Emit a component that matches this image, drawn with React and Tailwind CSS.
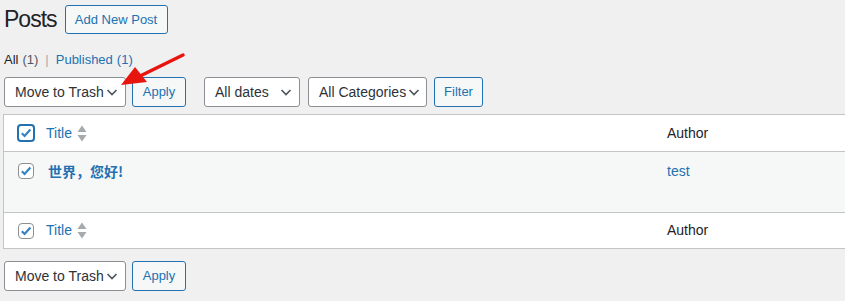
import React from "react";

function Chevron() {
  return (
    <svg width="12" height="12" viewBox="0 0 12 12" className="shrink-0">
      <path d="M1.5 4l4.5 4.5 4.5-4.5" fill="none" stroke="#50575e" strokeWidth="1.7" />
    </svg>
  );
}

function Select({ label, w, pr }) {
  return (
    <div
      className={`h-[30px] ${w} flex items-center justify-between pl-[10px] ${pr} bg-white border border-[#8c8f94] rounded-[3px] text-[#2c3338] text-[14px]`}
    >
      <span className="whitespace-nowrap">{label}</span>
      <Chevron />
    </div>
  );
}

function Btn({ label, w }) {
  return (
    <div
      className={`h-[30px] ${w} flex items-center justify-center bg-[#f6f7f7] border border-[#2271b1] rounded-[3px] text-[#2271b1] text-[13px]`}
    >
      {label}
    </div>
  );
}

function Check({ focus }) {
  return (
    <div
      className={
        focus
          ? "w-[18px] h-[18px] rounded-[4px] border-2 border-[#2271b1] bg-white flex items-center justify-center"
          : "w-[16px] h-[16px] rounded-[4px] border border-[#8c8f94] bg-white flex items-center justify-center"
      }
    >
      <svg width="12" height="12" viewBox="0 0 12 12">
        <path d="M1.8 6.2l2.8 2.8L10.4 2.6" fill="none" stroke="#3582c4" strokeWidth="2.2" />
      </svg>
    </div>
  );
}

function Sort() {
  return (
    <svg width="10" height="17" viewBox="0 0 10 17" className="ml-[5px]">
      <path d="M0.5 7L5 0.5 9.5 7z" fill="#a7aaad" />
      <path d="M0.5 10L5 16.5 9.5 10z" fill="#a7aaad" />
    </svg>
  );
}

function HeadRow({ focus, h, border }) {
  return (
    <div className={`flex items-center ${h} ${border} bg-white`}>
      <div className="w-[42px] flex justify-center pl-[2px]">
        <Check focus={focus} />
      </div>
      <div className="flex items-center w-[621px] text-[14px] text-[#2271b1]">
        Title
        <Sort />
      </div>
      <div className="text-[14px] text-[#1d2327]">Author</div>
    </div>
  );
}

export default function App() {
  return (
    <div className="relative min-h-[301px] bg-[#f0f0f1] overflow-hidden font-['Liberation_Sans',sans-serif] text-[13px]">
      <div className="pl-[4px] pt-[5px]">
        <div className="flex items-center h-[29px]">
          <h1 className="text-[23px] leading-[29px] tracking-[-1px] text-[#1d2327] font-normal">Posts</h1>
          <div className="ml-[8px] h-[29px] w-[103px] flex items-center justify-center bg-[#f6f7f7] border border-[#2271b1] rounded-[3px] text-[#2271b1] text-[13px]">
            Add New Post
          </div>
        </div>
        <div className="mt-[17px] h-[18px] leading-[18px] text-[13px] flex items-center text-[#50575e]">
          <span className="text-[#1d2327]">All</span>
          <span className="ml-[4px]">(1)</span>
          <span className="mx-[7px] text-[#a7aaad]">|</span>
          <span className="text-[#2271b1]">Published</span>
          <span className="ml-[4px] text-[#2271b1]">(1)</span>
        </div>
        <div className="mt-[8px] flex items-center">
          <Select label="Move to Trash" w="w-[122px]" pr="pr-[7px]" />
          <div className="ml-[6px]">
            <Btn label="Apply" w="w-[54px]" />
          </div>
          <div className="ml-[18px]">
            <Select label="All dates" w="w-[96px]" pr="pr-[7px]" />
          </div>
          <div className="ml-[8px]">
            <Select label="All Categories" w="w-[119px]" pr="pr-[6px]" />
          </div>
          <div className="ml-[7px]">
            <Btn label="Filter" w="w-[49px]" />
          </div>
        </div>
        <div className="mt-[7px] -ml-px w-[880px] border border-[#c3c4c7] bg-white">
          <HeadRow focus h="h-[37px]" border="border-b border-[#c3c4c7]" />
          <div className="flex items-start h-[61px] border-b border-[#c3c4c7] bg-[#f6f7f7] pt-[11px]">
            <div className="w-[42px] flex justify-center pl-[2px]">
              <Check />
            </div>
            <div className="w-[621px] pl-[2px] text-[14px] font-bold text-[#2271b1] font-['Noto_Sans_CJK_SC',sans-serif] leading-[16px]">
              世界，您好!
            </div>
            <div className="text-[14px] text-[#2271b1] leading-[16px]">test</div>
          </div>
          <HeadRow h="h-[35px]" border="" />
        </div>
        <div className="mt-[12px] flex items-center">
          <Select label="Move to Trash" w="w-[122px]" pr="pr-[7px]" />
          <div className="ml-[6px]">
            <Btn label="Apply" w="w-[54px]" />
          </div>
        </div>
      </div>
      <svg className="absolute left-0 top-0 pointer-events-none" width="845" height="301">
        <line x1="183" y1="55" x2="136" y2="78" stroke="#e8150e" strokeWidth="3.5" strokeLinecap="round" />
        <path d="M121 85 L135 67 L147 82 Z" fill="#e8150e" />
      </svg>
    </div>
  );
}
